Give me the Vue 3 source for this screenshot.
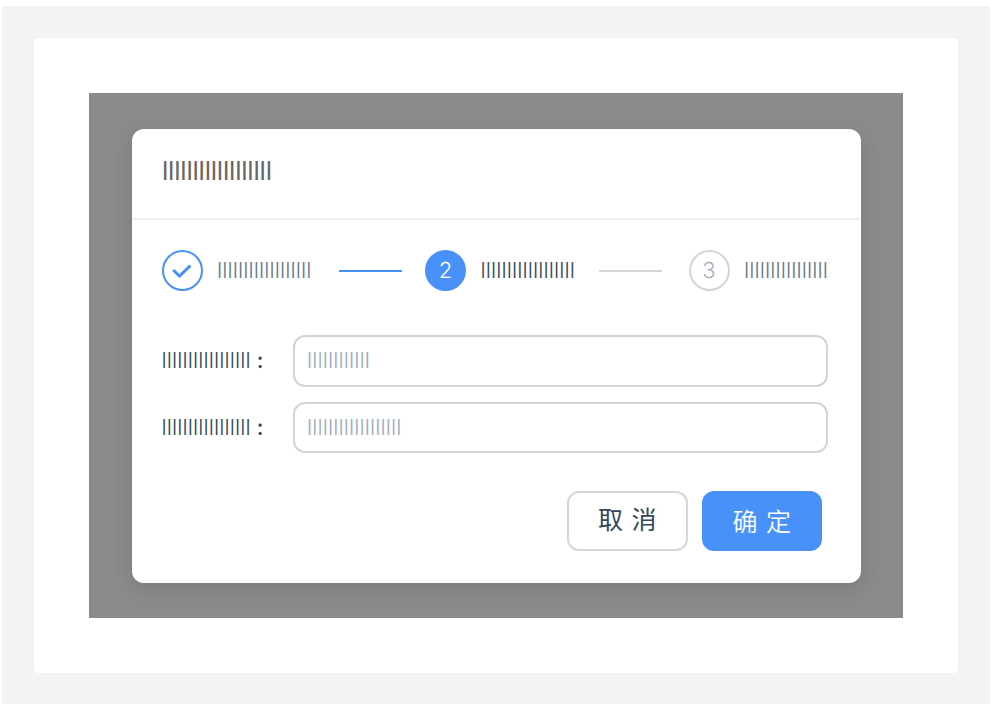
<script setup>
const steps = [
  { state: 'done', label: 'l'.repeat(18) },
  { state: 'active', mark: '2', label: 'l'.repeat(18) },
  { state: 'wait', mark: '3', label: 'l'.repeat(16) },
]
const fields = [
  { label: 'l'.repeat(17), placeholder: 'l'.repeat(12) },
  { label: 'l'.repeat(17), placeholder: 'l'.repeat(18) },
]
</script>

<template>
  <main class="frame">
    <section class="card">
      <div class="mask">
        <div class="modal">
          <header class="head">{{ 'l'.repeat(18) }}</header>
          <div class="steps">
            <div v-for="(s, i) in steps" :key="i" class="step" :class="s.state">
              <span class="dot">
                <svg v-if="s.state === 'done'" width="22" height="16" viewBox="0 0 22 16">
                  <path d="M3 7.8L8.5 13.1L18.6 3.4" />
                </svg>
                <template v-else>{{ s.mark }}</template>
              </span>
              <span class="title">{{ s.label }}</span>
              <i v-if="i < 2" class="line"></i>
            </div>
          </div>
          <div class="form">
            <div v-for="(f, i) in fields" :key="i" class="row">
              <label class="label">{{ f.label }}<span class="colon">:</span></label>
              <div class="input">{{ f.placeholder }}</div>
            </div>
          </div>
          <footer class="foot">
            <button class="btn">取 消</button>
            <button class="btn primary">确 定</button>
          </footer>
        </div>
      </div>
    </section>
  </main>
</template>

<style>
body {
  background: #fff;
}
</style>

<style scoped>
* {
  box-sizing: border-box;
}
.frame {
  width: 988px;
  height: 698px;
  margin: 6px 0 0 2px;
  padding: 32px;
  background: #f2f3f5;
  font: 300 22px/28px Inter, "Noto Sans CJK SC", sans-serif;
  text-rendering: geometricPrecision;
  color: #34495e;
  display: flow-root;
}
.card {
  width: 924px;
  height: 635px;
  padding: 55px;
  border-radius: 4px;
  background: #fff;
}
.mask {
  width: 814px;
  height: 525px;
  padding: 35.5px 42px 0 43px;
  background: #8b8b8b;
}
.modal {
  width: 729px;
  height: 454px;
  border-radius: 12px;
  background: #fff;
  box-shadow: 0 6px 20px rgba(0, 0, 0, 0.12);
}
.head {
  height: 91px;
  padding: 0 29px;
  margin: 0 1px;
  border-bottom: 2px solid #efefef;
  font-size: 26px;
  font-weight: 400;
  line-height: 85px;
  letter-spacing: -0.2px;
  color: #666;
}
.steps {
  display: flex;
  padding: 30px 0 0 29.5px;
}
.step {
  display: flex;
  flex-shrink: 0;
  align-items: center;
  width: 263.5px;
  height: 42px;
}
.dot {
  display: flex;
  flex-shrink: 0;
  align-items: center;
  justify-content: center;
  width: 41px;
  height: 41px;
  border: 2px solid #4791f8;
  border-radius: 50%;
}
.dot svg {
  fill: none;
  stroke: #4791f8;
  stroke-width: 2.9;
  stroke-linecap: round;
  stroke-linejoin: round;
}
.active .dot {
  background: #4791f8;
  color: #fff;
}
.wait .dot {
  border-color: #cfd5da;
  color: #a5b1c2;
}
.title {
  width: 121px;
  flex-shrink: 0;
  padding: 1px 0 0 14.5px;
  letter-spacing: 0.12px;
  color: #66798c;
}
.active .title {
  color: #34495e;
}
.line {
  width: 63px;
  height: 2px;
  margin-left: 15px;
  background: #d2d7db;
}
.active .line {
  margin-left: 11.5px;
}
.done .line {
  background: #4791f8;
}
.form {
  display: flex;
  flex-direction: column;
  gap: 15px;
  padding: 43.5px 33.5px 0 29px;
}
.row {
  display: flex;
  height: 51.5px;
  align-items: center;
}
.label {
  width: 131.5px;
  padding: 1px 0 0 0.5px;
  letter-spacing: 0.12px;
}
.colon {
  margin-left: 6px;
  font-weight: 500;
}
.input {
  flex: 1;
  height: 51.5px;
  padding-left: 12.5px;
  border: 2px solid #cfd5da;
  border-radius: 12px;
  line-height: 49px;
  letter-spacing: 0.12px;
  color: #9dacbc;
}
.foot {
  display: flex;
  justify-content: flex-end;
  gap: 14px;
  padding: 37.5px 39px 0 0;
}
.btn {
  width: 120.5px;
  height: 60px;
  padding: 0 0 5px;
  border: 2px solid #d2d7db;
  border-radius: 12px;
  background: #fff;
  font-family: "Noto Sans CJK SC", sans-serif;
  font-weight: 400;
  font-size: 25px;
  line-height: 50px;
  word-spacing: 3px;
  color: #34495e;
}
.primary {
  padding: 0 0 2px;
  font-weight: 350;
  border-color: #4791f8;
  background: #4791f8;
  color: #fff;
}
</style>
